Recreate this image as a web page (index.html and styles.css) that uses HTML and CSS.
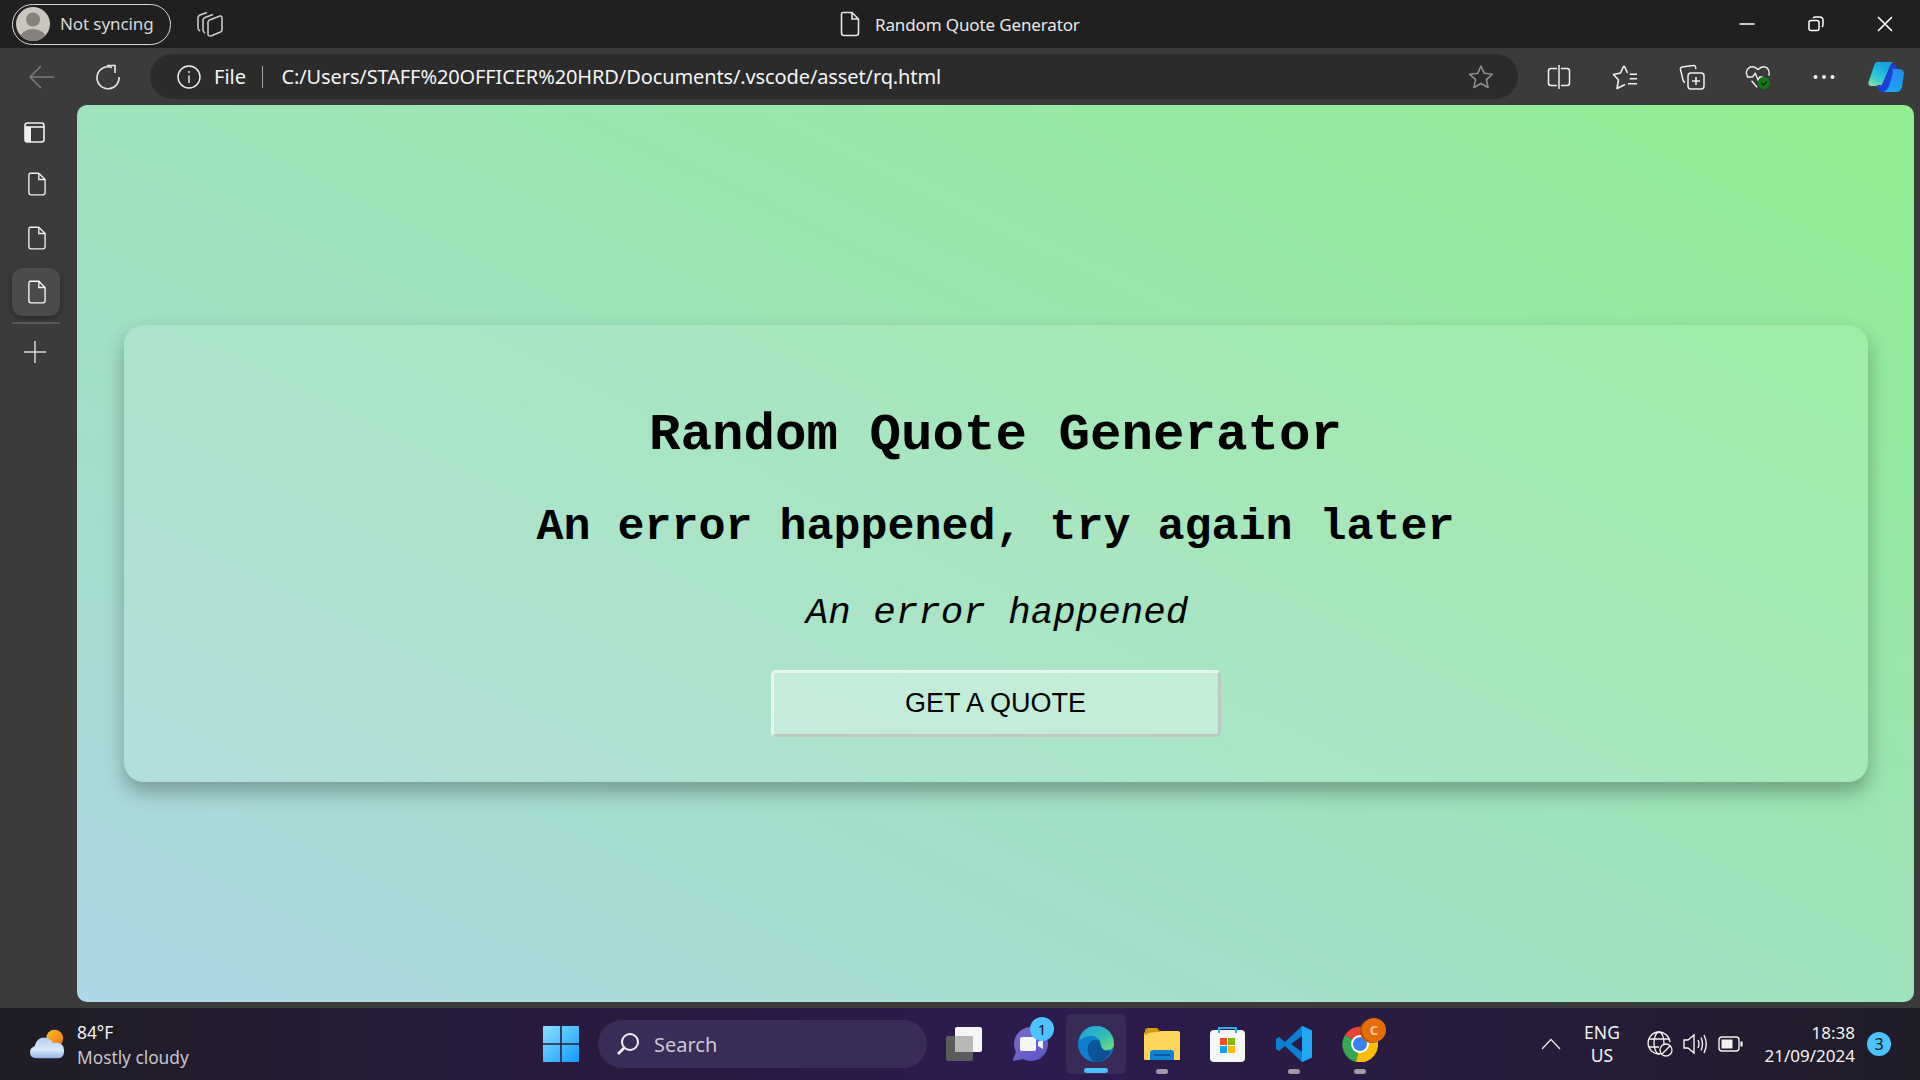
FILE: index.html
```html
<!DOCTYPE html>
<html lang="en">
<head>
<meta charset="utf-8">
<title>Random Quote Generator</title>
<link rel="stylesheet" href="styles.css">
</head>
<body>
<div class="window">
  <header class="titlebar">
    <div class="title-left">
      <div class="profile">
        <svg class="avatar" viewBox="0 0 34 34"><defs><clipPath id="av"><circle cx="17" cy="17" r="17"/></clipPath></defs><circle cx="17" cy="17" r="17" fill="#c9c6c0"/><g clip-path="url(#av)" fill="#85817c"><circle cx="17" cy="12.5" r="7"/><ellipse cx="17" cy="31" rx="13" ry="9"/></g></svg>
        <span>Not syncing</span>
      </div>
      <svg class="ico tabs-ico" viewBox="0 0 26 26" fill="none" stroke="#cfcfcf" stroke-width="1.5"><path d="M10 1.500 L3 4 Q1 5 1 7 V17 Q1 19 3 20"/><path d="M16 3.500 L8 6.500 Q6 7.500 6 9 V19 Q6 21 8 22"/><path d="M12.500 9 L23 5 Q25 4.500 25 7 V19 Q25 20.500 23.500 21 L14 25 Q11 25.500 11 23 V11 Q11 10 12.500 9 Z"/></svg>
    </div>
    <div class="title-center">
      <svg class="ico doc-title" viewBox="0 0 20 26" fill="none" stroke="#e6e6e6" stroke-width="1.6"><path d="M3 1.5 H12 L18.5 8 V22 Q18.5 24.5 16 24.5 H4 Q1.5 24.5 1.5 22 V3 Q1.5 1.5 3 1.5 Z M12 1.5 V8 H18.5"/></svg>
      <span>Random Quote Generator</span>
    </div>
    <div class="wincontrols">
      <svg class="ico winbtn" viewBox="0 0 16 16" stroke="#fff" stroke-width="1.5" fill="none"><path d="M0.5 8 H15.5"/></svg>
      <svg class="ico winbtn" viewBox="0 0 16 16" stroke="#fff" stroke-width="1.5" fill="none"><rect x="1" y="4.5" width="10" height="10" rx="2"/><path d="M5 2 Q6 1 7.5 1 H11.5 Q15 1 15 4.500 V8.500 Q15 10 14 11"/></svg>
      <svg class="ico winbtn" viewBox="0 0 16 16" stroke="#fff" stroke-width="1.6" fill="none"><path d="M1 1 L15 15 M15 1 L1 15"/></svg>
    </div>
  </header>

  <nav class="toolbar">
    <svg class="ico back" viewBox="0 0 26 26" fill="none" stroke="#7d7d7d" stroke-width="1.5"><path d="M1 13 H25 M12 2 L1 13 L12 24"/></svg>
    <svg class="ico reload" viewBox="0 0 26 26" fill="none" stroke="#e8e8e8" stroke-width="1.6"><path d="M17 3.500 A11 11 0 1 0 24 13"/><path d="M14 1 L22 1 L22 8.500" transform="translate(-2 0.5)"/></svg>
    <div class="addressbar">
      <svg class="ico info" viewBox="0 0 24 24" fill="none" stroke="#f0f0f0" stroke-width="1.4"><circle cx="12" cy="12" r="11"/><path d="M12 10.500 V18 M12 6 V8"/></svg>
      <span class="file">File</span>
      <span class="sep"></span>
      <span class="url">C:/Users/STAFF%20OFFICER%20HRD/Documents/.vscode/asset/rq.html</span>
      <svg class="ico star" viewBox="0 0 26 26" fill="none" stroke="#8f8f8f" stroke-width="1.6" stroke-linejoin="round"><path d="M13 2 L16.300 9.300 L24.500 10.200 L18.400 15.600 L20.100 23.500 L13 19.500 L5.900 23.500 L7.600 15.600 L1.500 10.200 L9.700 9.300 Z"/></svg>
    </div>
    <div class="tools">
      <svg class="ico tool" viewBox="0 0 24 26" fill="none" stroke="#f0f0f0" stroke-width="1.5"><path d="M10 4.500 H4 Q1.500 4.500 1.500 7 V19 Q1.500 21.500 4 21.500 H10 M14 4.500 H20 Q22.500 4.500 22.500 7 V19 Q22.500 21.500 20 21.500 H14 M12 1 V25"/></svg>
      <svg class="ico tool" viewBox="0 0 26 26" fill="none" stroke="#f0f0f0" stroke-width="1.6" stroke-linejoin="round"><path d="M15.500 9 L12.500 2.500 Q12 2 11.500 2.500 L8.500 9 L1.500 10.500 L6.500 16 L5 24.500 L13 20.500"/><path d="M17.700 10.300 H25 M17.700 14.700 H25 M16 19.700 H25"/></svg>
      <svg class="ico tool" viewBox="0 0 26 26" fill="none" stroke="#f0f0f0" stroke-width="1.5"><rect x="9" y="9" width="16" height="16" rx="3"/><path d="M17 13 V21 M13 17 H21"/><path d="M17 5 L16.500 3 Q16 1 14 1.500 L3 3 Q1 3.500 1.500 5.500 L4 16 Q4.500 18 6 18.500"/></svg>
      <svg class="ico tool" viewBox="0 0 28 28" fill="none" stroke="#f0f0f0" stroke-width="1.5"><path d="M3 14 Q1 11 1.500 8.500 Q3 3 8 3 Q11 3 14 6 Q17 3 20 3 Q25 3 26 9 Q26.300 11 25.500 12.500"/><path d="M2 14 H8 L11 10 L14 17 L16 14 H19 M7 18 L13 25"/><circle cx="20.500" cy="20.500" r="6.500" fill="#107c10" stroke="none"/><path d="M17.500 20.500 L19.700 22.700 L23.500 18.700" stroke="#1d1d1d"/></svg>
      <svg class="ico tool" viewBox="0 0 24 26" fill="#f0f0f0"><circle cx="3.500" cy="13" r="2"/><circle cx="12" cy="13" r="2"/><circle cx="20.500" cy="13" r="2"/></svg>
      <svg class="ico copilot" viewBox="0 0 36 32">
        <defs>
          <linearGradient id="cp1" x1="0.700" y1="0" x2="0.200" y2="1"><stop offset="0" stop-color="#0f9ee8"/><stop offset="0.600" stop-color="#2dc5d8"/><stop offset="1" stop-color="#7ee0a0"/></linearGradient>
          <linearGradient id="cp2" x1="0.500" y1="0" x2="0.500" y2="1"><stop offset="0" stop-color="#2a8af0"/><stop offset="1" stop-color="#19a6f2"/></linearGradient>
        </defs>
        <path d="M9 1 H26 Q24 1 22 5 L14 24 Q12 27 8 25 H3 Q0 25 0.500 21 L6 5 Q7 1 9 1 Z" fill="url(#cp1)"/>
        <path d="M23 4 Q27 1 29 6 L22 24 Q21 28 18 31 H13 Q10 29 9 24 H14 Z" fill="#1d3fd8"/>
        <path d="M24 8 H31 Q35 8 36 12 L34 26 Q33 31 28 31 H15 Q19 30 21 25 L25 12 Z" fill="url(#cp2)"/>
      </svg>
    </div>
  </nav>

  <div class="middle">
    <aside class="sidebar">
      <svg class="ico panel-ico" viewBox="0 0 21 21" fill="none" stroke="#efefef" stroke-width="1.600"><rect x="1" y="1" width="19" height="19" rx="2.500"/><path d="M1 5 H20"/><path d="M1 5 H7 V20 H3 Q1 20 1 18 Z" fill="#efefef" stroke="none"/></svg>
      <span class="tabslot"><svg class="ico doc" viewBox="0 0 20 26" fill="none" stroke="#f0f0f0" stroke-width="1.500"><path d="M3 1 H12 L19 8 V22.500 Q19 25 16.500 25 H3.500 Q1 25 1 22.500 V3 Q1 1 3 1 Z M12 1 V8 H19"/></svg></span>
      <span class="tabslot"><svg class="ico doc" viewBox="0 0 20 26" fill="none" stroke="#f0f0f0" stroke-width="1.500"><path d="M3 1 H12 L19 8 V22.500 Q19 25 16.500 25 H3.500 Q1 25 1 22.500 V3 Q1 1 3 1 Z M12 1 V8 H19"/></svg></span>
      <span class="tabslot active"><svg class="ico doc" viewBox="0 0 20 26" fill="none" stroke="#f8f8f8" stroke-width="1.500"><path d="M3 1 H12 L19 8 V22.500 Q19 25 16.500 25 H3.500 Q1 25 1 22.500 V3 Q1 1 3 1 Z M12 1 V8 H19"/></svg></span>
      <span class="side-rule"></span>
      <svg class="ico plus" viewBox="0 0 22 22" stroke="#d8d8d8" stroke-width="1.500"><path d="M11 0 V22 M0 11 H22"/></svg>
    </aside>
    <main class="page">
      <section class="card">
        <h1>Random Quote Generator</h1>
        <h2>An error happened, try again later</h2>
        <p>An error happened</p>
        <button type="button">GET A QUOTE</button>
      </section>
    </main>
  </div>

  <footer class="taskbar">
    <div class="weather">
      <svg class="ico weather-ico" viewBox="0 0 38 38">
        <defs>
          <linearGradient id="sun" x1="0" y1="0" x2="1" y2="1"><stop offset="0" stop-color="#fbbf2c"/><stop offset="1" stop-color="#e8720c"/></linearGradient>
          <linearGradient id="cl" x1="0" y1="0" x2="0" y2="1"><stop offset="0" stop-color="#b3cdf2"/><stop offset="0.600" stop-color="#dbe8fa"/><stop offset="1" stop-color="#8fb4ea"/></linearGradient>
        </defs>
        <circle cx="26" cy="12" r="9" fill="url(#sun)"/>
        <path d="M7 33 Q0 33 0 27 Q0 22 5 20 Q7 11 15 11 Q23 12 24 17 Q36 15 36 25 Q36 33 30 33 Z" fill="url(#cl)"/>
      </svg>
      <div class="weather-text"><span class="temp">84°F</span><span class="cond">Mostly cloudy</span></div>
    </div>
    <div class="apps">
      <svg class="ico winlogo" viewBox="0 0 36 36"><defs><linearGradient id="wl" x1="0" y1="0" x2="1" y2="1"><stop offset="0" stop-color="#8be0ff"/><stop offset="1" stop-color="#0f9aff"/></linearGradient></defs><path d="M1 0 H17.200 V17.200 H0 V1 Q0 0 1 0 Z M18.800 0 H35 Q36 0 36 1 V17.200 H18.800 Z M0 18.800 H17.200 V36 H1 Q0 36 0 35 Z M18.800 18.800 H36 V35 Q36 36 35 36 H18.800 Z" fill="url(#wl)"/></svg>
      <div class="search">
        <svg class="ico search-ico" viewBox="0 0 24 24" fill="none" stroke="#f2f2f2" stroke-width="2"><circle cx="14" cy="10" r="8"/><path d="M8 16 L2 22" stroke-width="2.600"/></svg>
        <span>Search</span>
      </div>
      <svg class="ico taskview" viewBox="0 0 36 34"><rect x="0" y="9" width="27" height="25" rx="2" fill="#5c5c5c"/><rect x="9" y="0" width="27" height="25" rx="2" fill="#f5f5f5"/><rect x="9" y="9" width="18" height="16" fill="#b8b8b8"/></svg>
      <div class="app chat">
        <svg class="ico chat-ico" viewBox="0 0 36 36"><defs><linearGradient id="ch" x1="0" y1="0" x2="1" y2="1"><stop offset="0" stop-color="#7d6cc8"/><stop offset="1" stop-color="#5a55c8"/></linearGradient></defs><path d="M19 1 A17 17 0 1 1 11 33 L2 35 Q0 35 1 33 L4 26 A17 17 0 0 1 19 1 Z" fill="url(#ch)"/><rect x="8" y="11" width="16" height="14" rx="2" fill="#f6f6f6"/><path d="M26 16 L31 13 V23 L26 20 Z" fill="#f0f0f0"/></svg>
        <span class="badge num">1</span>
      </div>
      <div class="app focused">
        <svg class="ico edge-ico" viewBox="0 0 36 36">
          <defs>
            <linearGradient id="eg1" x1="0" y1="0" x2="1" y2="1"><stop offset="0" stop-color="#1b9de2"/><stop offset="0.600" stop-color="#35c1b1"/><stop offset="1" stop-color="#7fe06a"/></linearGradient>
            <linearGradient id="eg2" x1="0" y1="0" x2="1" y2="1"><stop offset="0" stop-color="#0c59a4"/><stop offset="1" stop-color="#114a8b"/></linearGradient>
          </defs>
          <circle cx="18" cy="18" r="18" fill="#0f7fd0"/>
          <path d="M1 15 C3 4 11 0 18 0 C29 0 36 8 36 18 C36 23 32 24 26 24 C22 24 20 22 22 18 C23 13 17 9 11 10 C6 11 2 13 1 15 Z" fill="url(#eg1)"/>
          <path d="M10 26 C8 18 14 13 19 14 C24 15 21 20 26 24 C30 26 33 24 33 25 C30 32 24 36 18 36 C14 36 11 31 10 26 Z" fill="url(#eg2)"/>
        </svg>
        <span class="run run-on"></span>
      </div>
      <div class="app">
        <svg class="ico folder-ico" viewBox="0 0 36 32"><rect x="0" y="4" width="36" height="28" rx="1.500" fill="#f5c033"/><path d="M0 9 Q0 5 3 5 H10 L14 3 H34 Q36 3 36 5 V31 Q36 32 34 32 H2 Q0 32 0 30 Z" fill="#fdd55a"/><path d="M1 3 Q1 0 4 0 H13 L17 4 H10 Q4 4 1 8 Z" fill="#d49c0c"/><path d="M6 32 V25 Q6 22 9 22 H27 Q30 22 30 25 V32 Z" fill="#1083d6"/><rect x="10" y="26" width="16" height="2" fill="#0a5a9e"/></svg>
        <span class="run"></span>
      </div>
      <div class="app">
        <svg class="ico store-ico" viewBox="0 0 36 36"><rect x="0" y="4" width="35" height="32" rx="4" fill="#f6f6f6"/><path d="M9 7 V2 H26 V7" fill="none" stroke="#26b2e8" stroke-width="2"/><rect x="10" y="12" width="7" height="7" fill="#f25022"/><rect x="18" y="12" width="7" height="7" fill="#7fba00"/><rect x="10" y="20" width="7" height="7" fill="#00a4ef"/><rect x="18" y="20" width="7" height="7" fill="#ffb900"/></svg>
      </div>
      <div class="app">
        <svg class="ico code-ico" viewBox="0 0 36 36"><path d="M26 0 L36 4.500 V31.500 L26 36 L9 20 L3 25 L0 23 V13 L3 11 L9 16 Z M26 10 L15 18 L26 26 Z" fill="#0b7fd1"/><path d="M26 0 L36 4.500 V31.500 L26 36 Z" fill="#1fa9f4"/></svg>
        <span class="run"></span>
      </div>
      <div class="app chrome">
        <svg class="ico chrome-ico" viewBox="0 0 36 36"><path d="M18 18 L3 9 A18 18 0 0 1 34 10 Z" fill="#ea4335"/><path d="M18 18 L3 9 A18 18 0 0 0 14 36 Z" fill="#34a853"/><path d="M18 18 L34 10 A18 18 0 0 1 14 36 Z" fill="#fbbc05"/><circle cx="18" cy="18" r="9" fill="#fff"/><circle cx="18" cy="18" r="7" fill="#3b82f0"/></svg>
        <span class="badge profile-badge">C</span>
        <span class="run"></span>
      </div>
    </div>
    <div class="tray">
      <svg class="ico chevron" viewBox="0 0 20 12" fill="none" stroke="#e8e8e8" stroke-width="1.300"><path d="M1 11 L10 1.500 L19 11"/></svg>
      <div class="lang"><span>ENG</span><span>US</span></div>
      <svg class="ico globe" viewBox="0 0 26 26" fill="none" stroke="#f2f2f2" stroke-width="1.300"><path d="M12 23 A11 11 0 1 1 23 11"/><ellipse cx="12" cy="12" rx="5" ry="11"/><path d="M2 8 H22 M2 16 H12"/><circle cx="19" cy="19" r="6" fill="#221b2d"/><path d="M15 23 L23 15"/></svg>
      <svg class="ico volume" viewBox="0 0 26 24" fill="none" stroke="#f2f2f2" stroke-width="1.400"><path d="M1 8 H5 L11 3 V21 L5 16 H1 Z"/><path d="M15 8 Q17 12 15 16 M18 5.500 Q21 12 18 18.500 M21 3 Q25.500 12 21 21"/></svg>
      <svg class="ico battery" viewBox="0 0 25 16" fill="none" stroke="#f2f2f2" stroke-width="1.400"><rect x="1" y="1" width="20" height="14" rx="3"/><rect x="3.500" y="3.500" width="11" height="9" fill="#f2f2f2" stroke="none"/><path d="M23.500 5.500 V10.500" stroke-width="2.200"/></svg>
      <div class="clock"><span>18:38</span><span>21/09/2024</span></div>
      <span class="badge notif">3</span>
    </div>
  </footer>
</div>
</body>
</html>
```
FILE: styles.css
```css
* { box-sizing: border-box; }
html, body { margin: 0; height: 100%; }
body { font-family: "Noto Sans", "Open Sans", sans-serif; background: #3b3b3b; overflow: hidden; }
.ico { display: block; flex: none; }

.window { width: 1920px; height: 1080px; display: flex; flex-direction: column; }

/* title bar */
.titlebar { height: 48px; flex: none; background: #202020; display: flex; align-items: center; position: relative; color: #e8e8e8; }
.title-left { display: flex; align-items: center; padding-left: 12px; }
.profile { width: 159px; height: 41px; border: 1.500px solid #d8d8d8; border-radius: 21px; display: flex; align-items: center; gap: 10px; padding: 0 0 2px 3px; font-size: 17px; letter-spacing: -0.1px; color: #d8d8d8; }
.avatar { width: 34px; height: 34px; flex: none; margin-top: 2px; }
.tabs-ico { width: 26px; height: 26px; margin-left: 26px; }
.title-center { position: absolute; left: 840px; top: 0; height: 48px; display: flex; align-items: center; gap: 15px; font-size: 17px; letter-spacing: -0.13px; }
.doc-title { width: 20px; height: 26px; }
.wincontrols { margin-left: auto; display: flex; gap: 53px; padding-right: 27px; }
.winbtn { width: 16px; height: 16px; }

/* toolbar */
.toolbar { height: 57px; flex: none; background: #3b3b3b; display: flex; align-items: center; }
.back { width: 26px; height: 26px; margin-left: 29px; }
.reload { width: 26px; height: 26px; margin-left: 40px; }
.addressbar { width: 1368px; height: 45px; margin-left: 29px; border-radius: 23px; background: #2b2b2b; display: flex; align-items: center; padding-left: 26px; color: #f4f4f4; font-size: 20px; }
.info { width: 24px; height: 24px; margin-left: 1px; }
.file { margin-left: 13px; }
.sep { width: 1.500px; height: 22px; background: #a8a8a8; margin: 0 18px 0 16px; }
.url { letter-spacing: -0.11px; }
.star { width: 26px; height: 26px; margin-left: auto; margin-right: 24px; }
.tools { display: flex; align-items: center; }
.tool { width: 26px; height: 26px; margin-left: 40.300px; }
.tools .tool:first-child { margin-left: 28px; }
.copilot { width: 36px; height: 32px; margin-left: 31px; }

/* middle */
.middle { flex: 1; display: flex; min-height: 0; }
.sidebar { width: 77px; flex: none; display: flex; flex-direction: column; align-items: flex-start; padding: 17px 0 0 12px; }
.panel-ico { width: 21px; height: 21px; margin: 0 0 17px 12px; }
.tabslot { width: 48px; height: 48px; margin-bottom: 6px; display: flex; align-items: center; justify-content: center; border-radius: 10px; }
.tabslot.active { background: #4b4b4b; box-shadow: 0 2px 5px rgba(0, 0, 0, 0.35); }
.doc { width: 18px; height: 24px; margin-left: 2px; }
.side-rule { width: 48px; height: 2px; background: #5a5a5a; }
.plus { width: 22px; height: 22px; margin: 17px 0 0 12px; }

.page { width: 1837px; height: 897px; flex: none; border-radius: 10px; background: linear-gradient(to top right, #add8e6, #90ee90); display: flex; align-items: center; justify-content: center; }
.card { width: 1744px; height: 457px; border-radius: 20px; background: rgba(255, 255, 255, 0.1); box-shadow: 0 10px 20px rgba(0, 0, 0, 0.3); display: flex; flex-direction: column; align-items: center; padding-top: 80px; font-family: "Liberation Mono", monospace; color: #000; }
.card h1 { margin: 0 0 37px; font-size: 52.500px; line-height: 60px; font-weight: 700; }
.card h2 { margin: 0 0 37px; font-size: 45px; line-height: 52px; font-weight: 700; }
.card p { margin: 0 0 35px; font-size: 37.500px; line-height: 44px; font-style: italic; padding-left: 3px; }
.card button { width: 450px; height: 67px; flex: none; border: 3px solid; border-color: #e8f5ef #bcc9c0 #bcc9c0 #e8f5ef; border-radius: 5px; background: rgba(255, 255, 255, 0.3); font-family: "Liberation Sans", sans-serif; font-size: 27px; color: #000; padding: 0; }

/* taskbar */
.taskbar { height: 72px; margin-top: 6px; flex: none; background: linear-gradient(90deg, #1f1d24 0%, #271b3c 25%, #2d1b4f 55%, #281c3e 75%, #201c28 100%); display: flex; align-items: center; position: relative; color: #f2f2f2; }
.weather { display: flex; align-items: center; gap: 11px; margin-left: 30px; width: 513px; }
.weather-ico { width: 36px; height: 38px; margin-top: 2px; }
.weather-text { display: flex; flex-direction: column; font-size: 17.300px; line-height: 25px; padding-top: 1px; }
.cond { color: #c9c6cc; }
.apps { display: flex; align-items: center; }
.winlogo { width: 36px; height: 36px; }
.search { width: 329px; height: 48px; margin-left: 19px; border-radius: 24px; background: #3a2c58; display: flex; align-items: center; padding-left: 18px; gap: 14px; font-size: 20px; color: #cbc7d4; }
.search-ico { width: 24px; height: 24px; }
.taskview { width: 36px; height: 34px; margin-left: 19px; }
.app { width: 60px; height: 60px; margin-left: 6px; position: relative; display: flex; align-items: center; justify-content: center; border-radius: 6px; }
.chat { margin-left: 18px; }
.focused { background: #392b58; margin-left: 6px; }
.chat-ico, .edge-ico, .store-ico, .code-ico, .chrome-ico { width: 36px; height: 36px; }
.folder-ico { width: 36px; height: 32px; }
.run { position: absolute; left: 24px; bottom: 0; width: 12px; height: 5px; border-radius: 3px; background: #a09aa8; }
.run-on { left: 18px; width: 24px; background: #4cc2ff; bottom: 1px; }
.badge { position: absolute; border-radius: 50%; display: flex; align-items: center; justify-content: center; }
.num { width: 24px; height: 24px; right: 6px; top: 3px; background: #4cc2ff; color: #111; font-size: 15px; }
.profile-badge { width: 24px; height: 24px; right: 4px; top: 4px; background: #e56c06; color: #f9c9a0; font-size: 13px; font-weight: 700; box-shadow: -2px 1px 0 #b85408; }
.tray { margin-left: auto; display: flex; align-items: center; }
.chevron { width: 20px; height: 12px; }
.lang { margin-left: 12px; width: 58px; display: flex; flex-direction: column; align-items: center; font-size: 17.500px; line-height: 23px; }
.globe { width: 26px; height: 26px; margin-left: 15.500px; }
.volume { width: 26px; height: 24px; margin-left: 10px; }
.battery { width: 25px; height: 16px; margin-left: 9px; }
.clock { width: 112.500px; display: flex; flex-direction: column; align-items: flex-end; font-size: 17px; line-height: 23px; }
.notif { position: static; width: 24px; height: 24px; margin: 0 29px 0 12px; background: #4cc2ff; color: #111; font-size: 16px; }
```
